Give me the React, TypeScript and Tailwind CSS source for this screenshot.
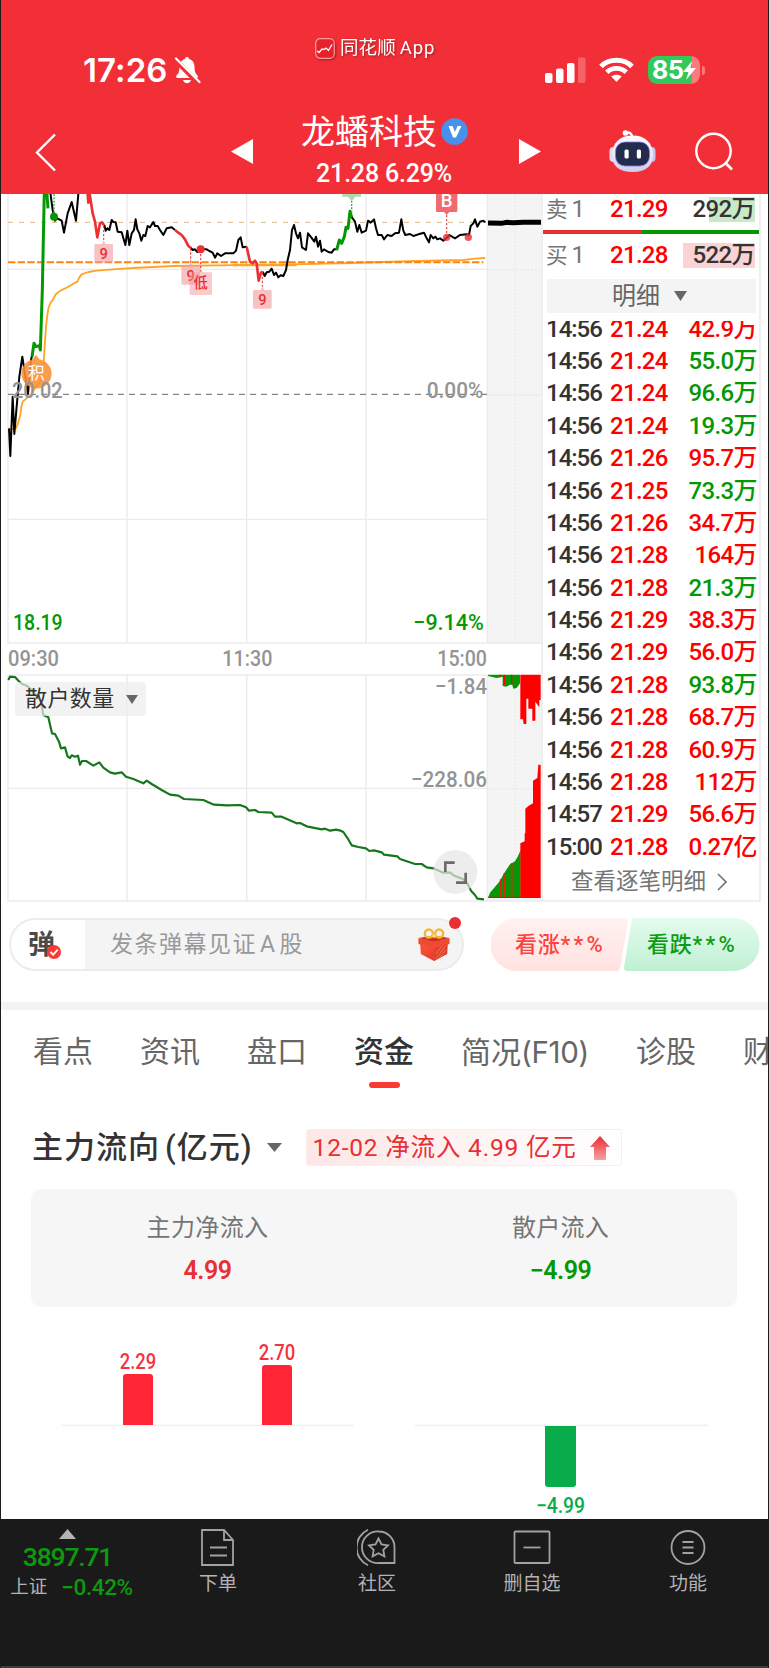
import React from 'react';

type Tick = [string, string, string, 'up' | 'down'];

const ticks: Tick[] = [
  ['14:56', '21.24', '42.9万', 'up'],
  ['14:56', '21.24', '55.0万', 'down'],
  ['14:56', '21.24', '96.6万', 'down'],
  ['14:56', '21.24', '19.3万', 'down'],
  ['14:56', '21.26', '95.7万', 'up'],
  ['14:56', '21.25', '73.3万', 'down'],
  ['14:56', '21.26', '34.7万', 'up'],
  ['14:56', '21.28', '164万', 'up'],
  ['14:56', '21.28', '21.3万', 'down'],
  ['14:56', '21.29', '38.3万', 'up'],
  ['14:56', '21.29', '56.0万', 'up'],
  ['14:56', '21.28', '93.8万', 'down'],
  ['14:56', '21.28', '68.7万', 'up'],
  ['14:56', '21.28', '60.9万', 'up'],
  ['14:56', '21.28', '112万', 'up'],
  ['14:57', '21.29', '56.6万', 'up'],
  ['15:00', '21.28', '0.27亿', 'up'],
];

function StatusBar() {
  return (
    <div className="flex h-[100px] items-start text-white">
      <div className="ml-[83px] mt-[53px] flex w-[120px] items-center">
        <span className="font-['Inter',sans-serif] text-[33px] leading-[34px] font-semibold tracking-[0.1px]">17:26</span>
        <svg className="ml-[6px] shrink-0" width="27" height="28" viewBox="0 0 27 28">
          <path d="M13 1c-1.400 0-2 .9-2 2-4 1-5.500 4.500-5.500 8 0 5-1.200 6.500-3 8.500-.9 1-.4 2.500 1 2.500h19c1.400 0 1.900-1.500 1-2.500-1.800-2-3-3.500-3-8.500 0-3.500-1.500-7-5.500-8 0-1.100-.6-2-2-2z" fill="#fff" />
          <path d="M9 24h8c-.5 2-2 3.200-4 3.200S9.500 26 9 24z" fill="#fff" />
          <path d="M1 3.500 L24 27" stroke="#f22f37" strokeWidth="5" />
          <path d="M2 2.500 L25.500 26" stroke="#fff" strokeWidth="2.200" strokeLinecap="round" />
        </svg>
      </div>
      <div className="ml-[112px] mt-[36px] flex w-[125px] items-center gap-[5px] drop-shadow-[1px_1px_1px_rgba(0,0,0,0.35)]">
        <svg width="20" height="21" viewBox="0 0 20 21" className="shrink-0">
          <rect x=".7" y=".7" width="18.600" height="19.600" rx="4.500" fill="#e5222b" stroke="#ff9a9d" strokeWidth="1.200" />
          <path d="M2 13l2 1.500 3-3.500 2 .5 2-1.500 2.500 2.500 2-3.500 1.500-2.500" fill="none" stroke="#fff" strokeWidth="1.300" />
        </svg>
        <span className="text-[18.500px] leading-[24px] tracking-[0.1px] whitespace-nowrap">同花顺<span className="ml-[4px] tracking-[0.900px]">App</span></span>
      </div>
      <svg className="ml-[105px] mt-[57px] shrink-0" width="41" height="27" viewBox="0 0 41 27">
        <rect x="0" y="16" width="7.500" height="10" rx="2" fill="#fff" />
        <rect x="11" y="11.500" width="7.500" height="14.500" rx="2" fill="#fff" />
        <rect x="22" y="6" width="7.500" height="20" rx="2" fill="#fff" />
        <rect x="33" y="0.500" width="7.500" height="25.500" rx="2" fill="#fff" opacity=".25" />
      </svg>
      <svg className="ml-[12px] mt-[56px] shrink-0" width="37" height="27" viewBox="0 0 37 27">
        <path d="M3 10.500 C11 2.200 26 2.200 34 10.500" fill="none" stroke="#fff" strokeWidth="5" />
        <path d="M8.800 16.200 C14 11 23 11 28.200 16.200" fill="none" stroke="#fff" strokeWidth="4.800" />
        <path d="M18.500 26 L13.300 20.500 C16 18 21 18 23.700 20.500Z" fill="#fff" />
      </svg>
      <div className="mt-[56px] ml-[13px] flex items-center">
        <div className="flex h-[28px] w-[52px] items-center overflow-hidden rounded-[9px] bg-[linear-gradient(90deg,#34c759_85%,#f87b80_85%)]">
          <span className="ml-[4px] font-['Inter',sans-serif] text-[25px] leading-[28px] font-bold tracking-[-0.3px]">85</span>
          <svg width="13" height="19" viewBox="0 0 13 19" className="-ml-px shrink-0"><path d="M9 0L0 11h5.500L3 19l10-12H7.500z" fill="#fff" /></svg>
        </div>
        <div className="ml-[1.500px] h-[9px] w-[3px] rounded-r-full bg-[#f87b80]" />
      </div>
    </div>
  );
}

function Header() {
  return (
    <header className="h-[194px] bg-[#f22f37]">
      <StatusBar />
      <div className="flex h-[94px] items-start text-white">
        <svg className="ml-[35px] mt-[33px] shrink-0" width="22" height="39" viewBox="0 0 22 39">
          <path d="M20 1.500 L2 19.500 L20 37.500" fill="none" stroke="#fff" strokeWidth="2.400" />
        </svg>
        <svg className="ml-[174px] mt-[39px] shrink-0" width="22" height="25" viewBox="0 0 22 25"><path d="M0 12.500L22 0v25z" fill="#fff" /></svg>
        <div className="ml-[33px] mt-[11px] flex w-[196px] flex-col items-center">
          <div className="flex items-center gap-[4px] pl-px">
            <span className="text-[34px] leading-[42px] font-normal whitespace-nowrap">龙蟠科技</span>
            <svg className="-mt-px" width="27" height="27" viewBox="0 0 27 27"><circle cx="13.500" cy="13.500" r="13.300" fill="#4791ed" /><path d="M7.500 8h4l2.500 6 2.500-6h4l-5.500 11.500h-3z" fill="#fff" /></svg>
          </div>
          <span className="mt-[8px] text-[25px] leading-[25px] font-medium tracking-[-0.2px] whitespace-nowrap">21.28 6.29%</span>
        </div>
        <svg className="ml-[37px] mt-[39px] shrink-0" width="22" height="25" viewBox="0 0 22 25"><path d="M22 12.500L0 0v25z" fill="#fff" /></svg>
        <svg className="ml-[68px] mt-[29px] shrink-0" width="47" height="44" viewBox="0 0 47 44">
          <defs>
            <linearGradient id="shell" x1="0" y1="0" x2="0" y2="1"><stop offset="0" stopColor="#fff" /><stop offset=".6" stopColor="#e6e2f6" /><stop offset="1" stopColor="#cfcbee" /></linearGradient>
          </defs>
          <path d="M16 4c4-1.500 7 0 7.500 5" fill="none" stroke="#fff" strokeWidth="2.400" />
          <circle cx="16.500" cy="4" r="2.800" fill="#fff" />
          <rect x=".5" y="18" width="9" height="15" rx="4" fill="#dcdaf5" />
          <rect x="37.500" y="18" width="9" height="15" rx="4" fill="#c9c6ec" />
          <path d="M23.500 6.500C36 6.500 44 14 44 26 44 36 38 43 23.500 43S3 36 3 26C3 14 11 6.500 23.500 6.500z" fill="url(#shell)" />
          <rect x="6.500" y="13" width="34" height="24" rx="9.500" fill="#232c4c" stroke="#8b74e8" strokeWidth=".8" />
          <rect x="15.500" y="20.500" width="4.200" height="9" rx="1.500" fill="#fff" />
          <rect x="27.800" y="20.500" width="4.200" height="9" rx="1.500" fill="#fff" />
        </svg>
        <svg className="ml-[39px] mt-[32px] shrink-0" width="40" height="40" viewBox="0 0 40 40">
          <circle cx="18.500" cy="19" r="17.200" fill="none" stroke="#fff" strokeWidth="2.400" />
          <path d="M30.500 31 L37 37.500" stroke="#fff" strokeWidth="2.600" />
        </svg>
      </div>
    </header>
  );
}

function Marker({ x, y, label }: { x: number; y: number; label: string }) {
  return (
    <g>
      <path d={`M${x - 28} ${y + 4}a4 4 0 0 1 4-4h18l6-11 6 11h18a4 4 0 0 1 4 4v48a4 4 0 0 1-4 4h-48a4 4 0 0 1-4-4z`} fill="#f4979c" fillOpacity=".6" />
      <text x={x} y={y + 44} textAnchor="middle" fontSize="44" fontWeight="500" fill="#e92f34">{label}</text>
    </g>
  );
}

const line = { fill: 'none', strokeLinejoin: 'round' as const };
const fit = { lengthAdjust: 'spacingAndGlyphs' as const };

/* Drawn in a triple-density coordinate system. */
function PriceChart() {
  return (
    <svg className="block" width="545" height="714" viewBox="0 12 1635 2142">
      <rect x="1462" y="12" width="167" height="1348" fill="#f4f4f4" />
      <rect x="1462" y="1455" width="167" height="677" fill="#f4f4f4" />
      <g stroke="#ebebeb" strokeWidth="4" fill="none">
        <path d="M24 12V1359H1629 M381 12V1359 M740 12V1359 M1098 12V1359 M1462 12V1359 M24 238H1462" />
        <path d="M24 1455H1462 M24 1795H1462 M24 1455V2133H1635 M381 1455V2133 M740 1455V2133 M1098 1455V2133 M1462 1455V2133" />
        <path d="M1546 12V1359 M1546 1455V2133 M1462 240H1629 M1462 1797H1629" stroke="#e6e6e6" strokeDasharray="4 7" />
        <path d="M24 988H1462 M1462 615H1629" />
      </g>
      <path d="M24 97H1460" stroke="#d9b98a" strokeWidth="3" strokeDasharray="15 18" />
      <path d="M24 613H1462" stroke="#858585" strokeWidth="3.500" strokeDasharray="18 15" />

      <g {...line} stroke="#ffa526" strokeWidth="5.500">
        <polyline points="27,718 48,715 54,700 61,675 64,650 68,635 80,625 95,610 108,590 125,570 131,520 134,470 138,410 142,375 146,352 152,338 158,330 168,312 180,303 200,293 215,284 232,275 238,262 245,253 265,246 290,242 340,238 400,234 520,228 650,226 740,225 880,223 1050,219 1250,213 1390,210 1425,206 1456,204" />
        <path d="M700 225H890" strokeWidth="7" />
      </g>
      <path d="M24 217H1450" stroke="#ff8210" strokeWidth="6" strokeDasharray="22 7" />

      <g {...line} stroke="#000" strokeWidth="6">
        <polyline points="27,715 31,798 38,620 43,732 50,650 58,560 67,500 76,560 84,612 93,510 98,490" />
        <polyline points="150,0 158,60 165,92 172,85 185,92 192,128 203,70 215,36 228,92 236,0" />
        <polyline points="313,105 317,122 322,115 328,120 335,90 340,96 347,97 353,125 365,127 376,165 382,122 388,165 395,130 402,120 407,88 412,118 418,130 424,152 430,135 436,138 443,108 450,112 460,96 465,108 473,108 480,120 490,135 500,115 515,112 525,120" />
        <polyline points="572,173 578,180 585,178 592,186 602,178 620,178 628,183 638,188 645,203 652,190 663,198 675,190 700,190 708,182 715,150 722,142 728,172 740,170" />
        <polyline points="788,245 794,258 800,247 808,245 815,236 822,255 828,248 835,262 842,256 850,258 858,240 863,210 870,180 876,120 882,105 888,130 894,145 900,128 906,172 918,180 924,130 932,140 943,155 948,140 954,170 960,152 965,185 972,178 985,186 995,188 1002,178 1012,178" />
        <polyline points="1054,80 1065,95 1072,125 1078,105 1085,128 1098,122 1104,92 1112,98 1122,88 1128,115 1134,135 1145,135 1152,148 1162,135 1175,138 1185,130 1197,128 1204,88 1210,122 1216,135 1230,132 1240,138 1255,133 1272,128 1280,145 1287,157 1292,135 1300,145 1306,140 1312,148 1320,145 1330,152 1342,142 1348,135 1365,145 1380,135 1400,133 1407,135 1412,108 1420,100 1425,88 1432,110 1440,95 1450,92 1456,97" />
      </g>
      <polyline points="1464,99 1505,100 1520,97 1540,98 1570,97 1623,97" stroke="#000" strokeWidth="15" fill="none" />
      <g {...line} stroke="#049804" strokeWidth="9">
        <polyline points="96,500 102,460 108,470 118,467 121,480 127,300 133,0 140,0 144,55" />
        <polyline points="1010,180 1018,150 1025,160 1033,140 1038,112 1044,115 1050,64 1055,82" />
      </g>
      <g {...line} stroke="#eb3036" strokeWidth="8">
        <polyline points="262,0 265,38 269,12 278,70 285,95 292,142 300,100 306,97 312,106" />
        <polyline points="525,120 535,128 545,135 555,148 565,168 573,174" />
        <polyline points="740,170 750,215 758,220 765,212 770,220 776,272 783,248 788,245" />
      </g>

      <path d="M162 12V75 M1055 32V70" stroke="#3faa44" strokeWidth="4" strokeDasharray="6 4" />
      <circle cx="162" cy="80" r="12" fill="#049804" />
      <path d="M1027 12h56v8h-17l-11 14-11-14h-17z" fill="#a9dcaa" />
      <g stroke="#ea4449" strokeWidth="3.500" strokeDasharray="7 5">
        <path d="M311 108V150 M572 175V220 M602 180V245 M787 248V290 M1340 75V140" />
      </g>
      <Marker x={311} y={162} label="9" />
      <Marker x={572} y={228} label="9" />
      <path d="M569 251a4 4 0 0 1 4-4h23l6-11 6 11h24a4 4 0 0 1 4 4v60a4 4 0 0 1-4 4h-59a4 4 0 0 1-4-4z" fill="#f4979c" fillOpacity=".5" />
      <text x="602" y="293" textAnchor="middle" fontSize="43" fontWeight="500" fill="#e92f34">低</text>
      <Marker x={787} y={300} label="9" />
      <circle cx="602" cy="178" r="12" fill="#e92f34" />
      <circle cx="1340" cy="142" r="11" fill="#e92f34" fillOpacity=".8" />
      <circle cx="1405" cy="142" r="11" fill="#e92f34" fillOpacity=".8" />
      <path d="M1308 12h64v50a4 4 0 0 1-4 4h-20l-8 9-8-9h-20a4 4 0 0 1-4-4z" fill="#f06b70" />
      <text x="1340" y="52" textAnchor="middle" fontSize="56" fontWeight="500" fill="#fff">B</text>

      <path d="M108 494l10 14c20 5 37 21 37 42a45 45 0 0 1-91 0c0-21 16-37 34-42z" fill="#fb9037" fillOpacity=".88" />
      <text x="109" y="567" textAnchor="middle" fontSize="50" fill="#fff">积</text>

      <g fontSize="68" fontWeight="500" fill="#949494">
        <text {...fit} x="36" y="625" textLength="152">20.02</text>
        <text {...fit} x="1280" y="625" textLength="170">0.00%</text>
        <text {...fit} x="24" y="1429" textLength="153">09:30</text>
        <text {...fit} x="667" y="1429" textLength="150">11:30</text>
        <text {...fit} x="1312" y="1429" textLength="149">15:00</text>
        <text {...fit} x="1305" y="1512" textLength="156">−1.84</text>
        <text {...fit} x="1233" y="1790" textLength="228">−228.06</text>
        <g fill="#049804">
          <text {...fit} x="39" y="1321" textLength="149">18.19</text>
          <text {...fit} x="1240" y="1321" textLength="211">−9.14%</text>
        </g>
      </g>

      <polyline {...line} stroke="#16761c" strokeWidth="6.500" points="25,1470 30,1460 45,1461 58,1475 68,1483 80,1487 95,1500 110,1520 122,1530 130,1575 145,1582 156,1630 165,1632 177,1655 183,1675 195,1672 203,1700 210,1704 215,1696 225,1700 234,1697 240,1724 246,1713 258,1713 280,1727 298,1717 310,1733 330,1747 345,1751 365,1747 378,1760 400,1767 430,1780 440,1772 455,1782 485,1800 510,1814 535,1817 552,1827 610,1830 625,1837 642,1844 680,1846 720,1845 738,1852 747,1862 765,1860 775,1866 815,1868 825,1880 845,1880 890,1900 900,1899 920,1909 965,1918 975,1916 990,1922 1008,1919 1022,1922 1030,1926 1043,1945 1055,1966 1075,1971 1098,1975 1108,1983 1122,1981 1145,1987 1152,1994 1192,1999 1200,2007 1245,2022 1265,2022 1280,2032 1300,2035 1330,2048 1352,2048 1360,2056 1390,2068 1402,2080 1413,2102 1425,2115 1432,2126 1452,2128" />

      <path d="M1464 1454H1560V1480L1550 1494 1540 1496 1536 1482 1518 1490 1508 1488V1460L1490 1464 1464 1458z" fill="#049804" />
      <path d="M1561 1454H1622V1530H1618V1552L1606 1535V1592H1597V1556H1585V1526H1579V1602H1571L1569 1588H1561z" fill="#fe0000" />
      <path d="M1500 1454v8 M1513 1454v34 M1535 1454v30" stroke="#fe0000" strokeWidth="4" />
      <path d="M1464 2124L1470 2108 1498 2075 1515 2045 1530 2023 1545 2014 1553 2000 1562 1980V2124z" fill="#049804" />
      <path d="M1561 2124V1960L1574 1954V1930H1576V1856L1585 1848 1599 1840V1772L1612 1764 1615 1724H1622V2124z" fill="#fe0000" />
      <path d="M1502 2124V2068 M1513 2124V2050 M1535 2124V2020" stroke="#d42a10" strokeWidth="5" />
      <path d="M1464 2122H1622" stroke="#fe0000" strokeWidth="3" />

      <circle cx="1366" cy="2046" r="66" fill="#e5e5e5" fillOpacity=".7" />
      <path d="M1336 2046V2018H1364 M1397 2048V2078H1368" stroke="#6b6b6b" strokeWidth="8" fill="none" />
    </svg>
  );
}

function Caret({ className }: { className: string }) {
  return <svg className={className} viewBox="0 0 14 10" preserveAspectRatio="none"><path d="M0 0h14L7 10z" fill="#666" /></svg>;
}

function OrderRow({ side, price, volume, shade }: { side: string; price: string; volume: string; shade: string }) {
  return (
    <div className="flex h-[29px] items-center pr-[4px] pl-[3px] text-[24px] leading-[29px]">
      <span className="w-[64px] text-[21.500px] whitespace-nowrap text-[#757575]">{side}<span className="ml-[4px] text-[24px]">1</span></span>
      <span className="w-[62px] font-medium tracking-[-0.7px] text-[#fe0000]">{price}</span>
      <span className={shade}>{volume}</span>
    </div>
  );
}

function QuotePanel() {
  return (
    <aside className="relative flex h-[708px] w-[220px] flex-col border-x-2 border-b-2 border-[#efefef] bg-white [&>*]:shrink-0">
      <div className="pt-[1px]">
        <OrderRow side="卖" price="21.29" volume="292万" shade="flex-1 bg-[linear-gradient(90deg,transparent_45%,#c9eac9_45%)] h-[25px] leading-[25px] text-right font-medium text-[#333] tracking-[-0.6px]" />
      </div>
      <div className="mt-[6px] flex h-[4px]">
        <div className="w-[99px] bg-[#e92f34]" />
        <div className="flex-1 bg-[#049804]" />
      </div>
      <div className="mt-[7px]">
        <OrderRow side="买" price="21.28" volume="522万" shade="flex-1 bg-[linear-gradient(90deg,transparent_13%,#fbd3d4_13%)] h-[25px] leading-[25px] text-right font-medium text-[#333] tracking-[-0.6px]" />
      </div>
      <div className="mr-[3px] ml-[4px] mt-[9px] flex h-[34px] items-center justify-center gap-[14px] bg-[#f4f4f4] pr-[4px]">
        <span className="text-[24px] leading-[34px] text-[#666]">明细</span>
        <Caret className="h-[10px] w-[13px]" />
      </div>
      <div className="mt-[8px] flex h-[542px] flex-col justify-end overflow-hidden">
        {ticks.map(([time, price, vol, dir], i) => (
          <div key={i} className="flex h-[32.400px] shrink-0 items-center pr-[2px] pl-[3px] text-[24px] leading-[32px] whitespace-nowrap">
            <span className="w-[64px] font-medium tracking-[-1px] text-[#333]">{time}</span>
            <span className="w-[62px] font-medium tracking-[-0.7px] text-[#fe0000]">{price}</span>
            <span className={dir === 'up' ? 'flex-1 text-right font-medium tracking-[-0.6px] text-[#fe0000]' : 'flex-1 text-right font-medium tracking-[-0.6px] text-[#049804]'}>{vol}</span>
          </div>
        ))}
      </div>
      <div className="flex items-center justify-center gap-[11px] pr-[4px] text-[22.500px] leading-[37px] text-[#757575]">
        <span>查看逐笔明细</span>
        <svg width="10" height="18" viewBox="0 0 10 18"><path d="M1 1l8 8-8 8" fill="none" stroke="#757575" strokeWidth="1.700" /></svg>
      </div>
    </aside>
  );
}

function Gift() {
  return (
    <svg width="32" height="34" viewBox="0 0 34 34" preserveAspectRatio="none">
      <defs><linearGradient id="gift" x1="0" y1="0" x2="1" y2="1"><stop offset="0" stopColor="#ff5a3c" /><stop offset="1" stopColor="#d93226" /></linearGradient></defs>
      <path d="M2 12h30l-1 14-14 7-14-7z" fill="url(#gift)" />
      <path d="M17 18l14-5-1 13-13 7z" fill="#e0412d" />
      <path d="M19 31l10-13M19 26l8-10M23 30l6-8" stroke="#f4744f" strokeWidth="1" />
      <path d="M.5 10L17 13l16.500-3v6L17 20 .5 16z" fill="#f04a33" />
      <path d="M.5 10L17 7.500l16.500 2.500L17 13.500z" fill="#c93020" />
      <ellipse cx="11.500" cy="5.500" rx="4.300" ry="4" fill="none" stroke="#f5b53a" strokeWidth="2.500" />
      <ellipse cx="22.500" cy="5.500" rx="4.300" ry="4" fill="none" stroke="#f5b53a" strokeWidth="2.500" />
      <circle cx="17" cy="8" r="2" fill="#ffd766" />
    </svg>
  );
}

function BarrageBar() {
  return (
    <div className="flex h-[96px] items-start pt-[12px] pl-[9px]">
      <div className="relative flex h-[53px] w-[455px] items-center rounded-full border-2 border-[#ececec] bg-[linear-gradient(90deg,#fff_74px,#f4f4f4_74px)]">
        <span className="ml-[17px] text-[27px] leading-[48px] font-bold text-[#4a4a4a]">弹</span>
        <span className="ml-[55px] text-[23px] leading-[48px] tracking-[1.500px] whitespace-nowrap text-[#999]">发条弹幕见证<span className="mx-[3px]">A</span>股</span>
        <span className="absolute top-[8px] left-[407px]"><Gift /></span>
        <span className="absolute top-[-3px] left-[438px] size-[12px] rounded-full bg-[#e92f34]" />
        <svg className="absolute top-[25px] left-[36px]" width="14" height="14" viewBox="0 0 14 14"><circle cx="7" cy="7" r="7" fill="#fb3a36" /><path d="M3.500 7l2.700 2.700 4.500-5" fill="none" stroke="#fff" strokeWidth="1.800" /></svg>
      </div>
      <div className="relative ml-[27px] h-[53px] w-[270px]">
        <svg className="block" width="270" height="53" viewBox="0 0 270 53">
          <defs>
            <linearGradient id="up" x1="0" y1="0" x2="0" y2="1"><stop offset="0" stopColor="#fff2f1" /><stop offset="1" stopColor="#ffe2e0" /></linearGradient>
            <linearGradient id="down" x1="0" y1="0" x2="0" y2="1"><stop offset="0" stopColor="#e4fbee" /><stop offset="1" stopColor="#bff0d3" /></linearGradient>
          </defs>
          <path d="M26 0H134a3 3 0 0 1 3 3.500L129 50a3.500 3.500 0 0 1-3.500 3H26A26 26 0 0 1 26 0z" fill="url(#up)" />
          <path d="M144 0H242a26.500 26.500 0 0 1 0 53H136a3 3 0 0 1-3-3.500L140.500 3A3.500 3.500 0 0 1 144 0z" fill="url(#down)" />
        </svg>
        <div className="absolute inset-0 flex items-center text-[22px] leading-[53px] font-medium tracking-[0.800px] whitespace-nowrap">
          <span className="pl-[24px] text-[#fb4340]">看涨<span className="tracking-[3.200px]">**</span>%</span>
          <span className="absolute left-[156px] text-[#0d9b12]">看跌<span className="tracking-[3.200px]">**</span>%</span>
        </div>
      </div>
    </div>
  );
}

function Tabs() {
  return (
    <nav className="flex h-[93px] items-start overflow-hidden pt-[21px] pl-[33px] text-[30px] leading-[42px] whitespace-nowrap text-[#666]">
      <span className="w-[107px] shrink-0">看点</span>
      <span className="w-[107px] shrink-0">资讯</span>
      <span className="w-[107px] shrink-0">盘口</span>
      <span className="flex w-[107px] shrink-0 flex-col font-medium text-[#333]">
        资金
        <span className="mt-[9px] ml-[15px] h-[6px] w-[31px] rounded-[3px] bg-[#fb3a33]" />
      </span>
      <span className="w-[175px] shrink-0">简况<span className="font-['Inter',sans-serif] text-[29.500px] tracking-[-0.3px]">(F10)</span></span>
      <span className="w-[107px] shrink-0">诊股</span>
      <span className="w-[60px] shrink-0">财务</span>
    </nav>
  );
}

function FundFlow() {
  return (
    <section className="flex h-[416px] flex-col">
      <div className="mt-[24px] flex h-[41px] items-center pl-[32px]">
        <h2 className="text-[31px] leading-[40px] font-medium tracking-[1px] whitespace-nowrap text-[#333]">主力流向<span className="ml-[5px]">(亿元)</span></h2>
        <Caret className="ml-[14px] h-[9px] w-[15px]" />
        <div className="ml-[24px] flex h-[37px] w-[316px] items-center rounded-[3px] border border-[#fdecec] bg-[linear-gradient(90deg,#fde6e6,#fff)] pl-[6px] text-[#e92f34]">
          <span className="text-[24.500px] leading-[36px] tracking-[0.800px] whitespace-nowrap">12-02 净流入 4.99 亿元</span>
          <svg className="ml-auto mr-[11px] shrink-0" width="20" height="24" viewBox="0 0 20 24">
            <defs><linearGradient id="rise" x1="0" y1="0" x2="0" y2="1"><stop offset="0" stopColor="#ea2c31" /><stop offset="1" stopColor="#f7a0a2" /></linearGradient></defs>
            <path d="M10 0L20 11h-4v12a1 1 0 0 1-1 1H5a1 1 0 0 1-1-1V11H0z" fill="url(#rise)" />
          </svg>
        </div>
      </div>
      <div className="mr-[32px] ml-[31px] mt-[21px] flex h-[118px] rounded-[10px] bg-[#f6f6f6] pt-[21px] text-center">
        <div className="flex-1">
          <div className="text-[24px] leading-[36px] tracking-[0.400px] text-[#757575]">主力净流入</div>
          <div className="mt-[11px] text-[25px] leading-[28px] font-semibold tracking-[-0.5px] text-[#e92f34]">4.99</div>
        </div>
        <div className="flex-1">
          <div className="text-[24px] leading-[36px] tracking-[0.200px] text-[#757575]">散户流入</div>
          <div className="mt-[11px] text-[25px] leading-[28px] font-semibold tracking-[-0.5px] text-[#049804]">−4.99</div>
        </div>
      </div>
      <svg className="block" width="768" height="212" viewBox="0 1307 768 212">
        <path d="M61 1425.500H354 M415 1425.500H708" stroke="#f3f3f3" strokeWidth="2" />
        <path d="M123 1425V1377a3 3 0 0 1 3-3h24a3 3 0 0 1 3 3v48z M262 1425V1368a3 3 0 0 1 3-3h24a3 3 0 0 1 3 3v57z" fill="#ff2536" />
        <path d="M545 1426V1484a3 3 0 0 0 3 3h25a3 3 0 0 0 3-3v-58z" fill="#08ac4b" />
        <g fontSize="21.500" fontWeight="500" textAnchor="middle">
          <text {...fit} x="138" y="1369" fill="#f5333c" textLength="36.500">2.29</text>
          <text {...fit} x="277" y="1359.500" fill="#f5333c" textLength="36.500">2.70</text>
          <text {...fit} x="560.500" y="1512.500" fill="#08ac4b" textLength="49">−4.99</text>
        </g>
      </svg>
    </section>
  );
}

function NavItem({ label, children }: { label: string; children: React.ReactNode }) {
  return (
    <div className="flex flex-col items-center">
      <svg width="40" height="38" viewBox="0 0 40 38" fill="none" stroke="#a2a2a2" strokeWidth="1.800">{children}</svg>
      <span className="mt-[3px] text-[19px] leading-[28px] whitespace-nowrap text-[#b3b3b3]">{label}</span>
    </div>
  );
}

function BottomBar() {
  return (
    <footer className="flex h-[149px] items-start border-b-2 border-[#3c3c3c] bg-[#1a1a1a]">
      <div className="flex w-[135px] flex-col items-center pt-[10px]">
        <svg width="17" height="10" viewBox="0 0 17 10"><path d="M8.500 0L17 10H0z" fill="#b3b3b3" /></svg>
        <span className="mt-[4px] text-[26.500px] leading-[28px] font-medium tracking-[-1.200px] text-[#0c9a0e]">3897.71</span>
        <div className="mt-[1px] flex items-center pl-[8px] text-[18.500px] leading-[30px] whitespace-nowrap text-[#b3b3b3]">
          <span>上证</span>
          <span className="ml-[14px] text-[22.500px] font-medium tracking-[-0.4px] text-[#0c9a0e]">−0.42%</span>
        </div>
      </div>
      <div className="flex pt-[10px]">
        <div className="ml-[63px] w-[40px]"><NavItem label="下单"><path d="M4 1h22l9 10v25H4z M26 1v10h9 M12 18.500h17 M12 26.500h17" /></NavItem></div>
        <div className="ml-[119px] w-[40px]"><NavItem label="社区"><path d="M22 2.500a15.800 15.800 0 1 0 0 31.500H37.500V18A15.500 15.500 0 0 0 22 2.500z M11 .8a19.500 19.500 0 0 0 0 35.500" /><path d="M21.500 9.500l3 6 6.500.9-4.700 4.500 1.100 6.500-5.900-3.100-5.900 3.100 1.100-6.500-4.700-4.500 6.500-.9z" /></NavItem></div>
        <div className="ml-[115px] w-[40px]"><NavItem label="删自选"><rect x="2.500" y="2.500" width="35" height="31.500" rx="1" /><path d="M11.500 18.500h17" /></NavItem></div>
        <div className="ml-[116px] w-[40px]"><NavItem label="功能"><circle cx="20" cy="18.500" r="16.500" /><path d="M14.500 13h11 M14.500 18.500h11 M14.500 24h11" /></NavItem></div>
      </div>
    </footer>
  );
}

export default function App() {
  return (
    <div className="relative flex h-[1668px] w-[769px] flex-col overflow-hidden bg-white font-['Roboto','Noto_Sans_CJK_SC',sans-serif] [&>*]:shrink-0">
      <Header />
      <div className="flex h-[712px]">
        <div className="relative w-[541px]">
          <PriceChart />
          <div className="absolute top-[488px] left-[15px] flex h-[34px] w-[131px] items-center rounded-[4px] bg-[#ececec]/70 pl-[10px] text-[#333]">
            <span className="text-[22px] leading-[34px] tracking-[0.400px]">散户数量</span>
            <Caret className="ml-[11px] h-[9px] w-[12px]" />
          </div>
        </div>
        <QuotePanel />
      </div>
      <BarrageBar />
      <div className="h-[8px] bg-[#f4f4f4]" />
      <Tabs />
      <FundFlow />
      <BottomBar />
      <div className="pointer-events-none absolute inset-0 border-x border-[#1c1c1c]" />
    </div>
  );
}
